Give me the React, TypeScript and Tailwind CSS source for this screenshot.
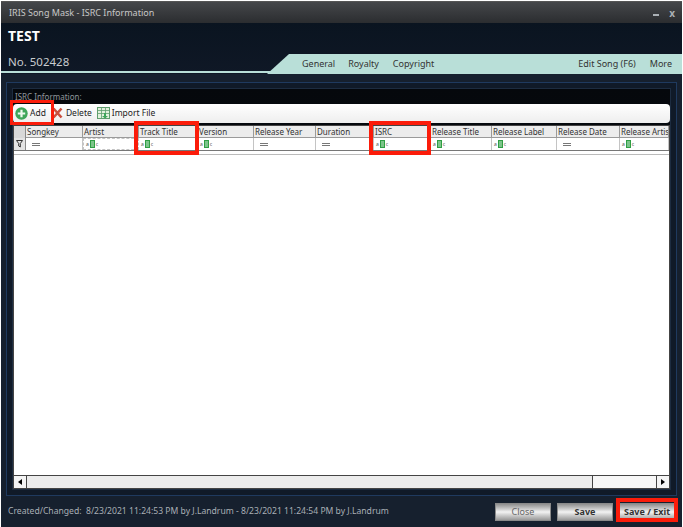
const columns = [
  { name: 'Songkey', width: 'w-[57px]', filter: 'eq' },
  { name: 'Artist', width: 'w-[56px]', filter: 'abc', focused: true },
  { name: 'Track Title', width: 'w-[59px]', filter: 'abc' },
  { name: 'Version', width: 'w-[56px]', filter: 'abc' },
  { name: 'Release Year', width: 'w-[62px]', filter: 'eq' },
  { name: 'Duration', width: 'w-[58px]', filter: 'eq' },
  { name: 'ISRC', width: 'w-[57px]', filter: 'abc' },
  { name: 'Release Title', width: 'w-[61px]', filter: 'abc' },
  { name: 'Release Label', width: 'w-[65px]', filter: 'abc' },
  { name: 'Release Date', width: 'w-[63px]', filter: 'eq' },
  { name: 'Release Artist', width: 'flex-1', filter: 'abc' },
];

function AbcIcon() {
  return (
    <span className="flex items-center gap-px text-[5px] leading-none text-[#555]">
      <span>a</span>
      <span className="h-[8px] w-[5px] border border-[#2f9e44] bg-[#7cc48a]" />
      <span>c</span>
    </span>
  );
}

function EqIcon() {
  return (
    <span className="ml-1 flex w-[8px] flex-col gap-px">
      <span className="h-px bg-[#777]" />
      <span className="h-px bg-[#777]" />
    </span>
  );
}

function PlusIcon() {
  return (
    <svg width="13" height="13" viewBox="0 0 13 13">
      <circle cx="6.5" cy="6.5" r="6.2" fill="#3fa65a" />
      <path d="M6.5 2.8v7.4M2.8 6.5h7.4" stroke="#eef8ef" strokeWidth="2.2" />
    </svg>
  );
}

function DeleteIcon() {
  return (
    <svg width="11" height="12" viewBox="0 0 11 12">
      <path d="M1.5 1.5 9.5 10.5M9.5 1.5 1.5 10.5" stroke="#c9503f" strokeWidth="2.6" />
    </svg>
  );
}

function ImportIcon() {
  return (
    <svg width="13" height="12" viewBox="0 0 13 12">
      <rect x="0.5" y="0.5" width="12" height="11" fill="#e2f1dd" stroke="#5f9e6e" />
      <path d="M0.5 3.5h12M0.5 6.5h12M4.5 0.5v11M8.5 0.5v11" stroke="#5f9e6e" strokeWidth="0.8" />
      <path d="M7 6v3H5l3 2.5L11 9H9V6z" fill="#3fa65a" />
    </svg>
  );
}

function FooterButton({ label, bold }: { label: string; bold?: boolean }) {
  return (
    <div
      className={`flex h-[18px] w-[56px] items-center justify-center border border-[#8a8a8a] bg-gradient-to-b from-[#8f8f8f] via-[#f2f2f2] to-[#9a9a9a] text-[9px] ${
        bold ? 'font-bold text-[#333]' : 'text-[#666]'
      }`}
    >
      {label}
    </div>
  );
}

export default function App() {
  return (
    <div className="relative flex h-[527px] w-[683px] flex-col overflow-hidden bg-white pt-px font-['Noto_Sans',sans-serif]">
      <div className="mx-px flex min-h-0 flex-1 flex-col border-t border-[#555] bg-[#16202e]">
        {/* Title bar */}
        <div className="flex h-[21px] items-center justify-between bg-gradient-to-b from-[#45474a] to-[#2b2d30] pl-2 pr-[7px] text-[9px] text-[#c8c8c8]">
          <span>IRIS Song Mask - ISRC Information</span>
          <span className="flex items-center gap-[10px] text-[10px] font-bold text-[#aab0b5]">
            <span className="mt-1 h-[2px] w-[6px] bg-[#aab0b5]" />
            <span className="leading-none">x</span>
          </span>
        </div>

        {/* Song header */}
        <div className="relative h-[51px] bg-gradient-to-b from-[#0a1420] to-[#0f1826]">
          <div className="pl-[7px] pt-[3px] text-[14px] leading-[20px] font-bold text-white">TEST</div>
          <div className="pl-[7px] pt-[7px] text-[11.5px] leading-[18px] text-[#c9ccd0]">No. 502428</div>
          <div className="absolute inset-x-0 bottom-[1px] h-[2px] bg-[#b9dfd8]" />
          <div className="absolute right-0 bottom-0 flex h-[20px] w-[415px] items-center bg-[#b9dfd8] pr-[10px] pl-[35px] text-[9px] text-[#333] [clip-path:polygon(22px_0,100%_0,100%_100%,0_100%)]">
            <span>General</span>
            <span className="ml-[13px]">Royalty</span>
            <span className="ml-[14px]">Copyright</span>
            <span className="ml-auto">Edit Song (F6)</span>
            <span className="ml-[14px]">More</span>
          </div>
        </div>

        {/* ISRC panel */}
        <div className="mx-[5px] mt-[8px] flex h-[414px] flex-col border border-[#1f3a5f] bg-[#101a28] p-[5px]">
          <div className="flex min-h-0 flex-1 flex-col border border-[#1d2c40] bg-gradient-to-b from-[#05080c] to-[#0a1420]">
            <div className="h-[15px] pl-[2px] text-[8px] leading-[16px] text-[#8f959b]">ISRC Information:</div>
            <div className="flex h-[19px] items-center rounded-sm bg-gradient-to-b from-white to-[#eeeeee] pb-px pl-[2px] text-[8.5px] text-[#222]">
              <PlusIcon />
              <span className="ml-[2px]">Add</span>
              <span className="ml-[6px]"><DeleteIcon /></span>
              <span className="ml-[3px]">Delete</span>
              <span className="ml-[5px]"><ImportIcon /></span>
              <span className="ml-[2px]">Import File</span>
            </div>

            <div className="mt-[2px] flex min-h-0 flex-1 flex-col border border-[#444] bg-white">
              <div className="flex h-[12px] bg-[#ececec]">
                <div className="w-[12px] shrink-0 border-r border-[#8a8a8a] bg-[#d8d8d8]" />
                {columns.map((col) => (
                  <div
                    key={col.name}
                    className={`${col.width} shrink-0 overflow-hidden border-r border-b border-[#9a9a9a] pl-[1px] text-[8px] leading-[11px] whitespace-nowrap text-[#333]`}
                  >
                    {col.name}
                  </div>
                ))}
              </div>
              <div className="flex h-[13px] border-b border-[#777] bg-white">
                <div className="flex w-[12px] shrink-0 items-center justify-center border-r border-[#8a8a8a] bg-[#e4e4e4]">
                  <svg width="7" height="8" viewBox="0 0 7 8">
                    <path d="M0.5 0.5h6L4.3 3.5V7L2.7 6V3.5z" fill="none" stroke="#333" />
                  </svg>
                </div>
                {columns.map((col) => (
                  <div
                    key={col.name}
                    className={`${col.width} flex shrink-0 items-center border-r border-[#c4c4c4] pl-[2px] ${
                      col.focused ? 'border border-dashed border-[#555]' : ''
                    }`}
                  >
                    {col.filter === 'abc' ? <AbcIcon /> : <EqIcon />}
                  </div>
                ))}
              </div>
              <div className="mt-[3px] h-px bg-[#bbb]" />
              <div className="min-h-0 flex-1 bg-white" />
              <div className="flex h-[13px] items-stretch border-t border-[#444] bg-[#f7f7f7]">
                <div className="flex w-[13px] items-center justify-center border-r border-[#444] bg-[#f4f4f4]">
                  <span className="h-0 w-0 border-y-[3px] border-r-[4px] border-y-transparent border-r-black" />
                </div>
                <div className="w-[566px] border-r border-[#444] bg-[#ececec]" />
                <div className="flex-1" />
                <div className="flex w-[13px] items-center justify-center border-l border-[#444] bg-[#f4f4f4]">
                  <span className="h-0 w-0 border-y-[3px] border-l-[4px] border-y-transparent border-l-black" />
                </div>
              </div>
            </div>
          </div>
        </div>

        {/* Footer */}
        <div className="flex flex-1 items-center pr-[7px] pl-[7px] text-[8.6px] text-[#a9afb5]">
          <span className="whitespace-nowrap">
            Created/Changed:&nbsp; 8/23/2021 11:24:53 PM by J.Landrum - 8/23/2021 11:24:54 PM by J.Landrum
          </span>
          <div className="ml-auto flex gap-[6px]">
            <FooterButton label="Close" />
            <FooterButton label="Save" bold />
            <FooterButton label="Save / Exit" bold />
          </div>
        </div>
      </div>

      {/* Red callouts drawn over the screenshot */}
      <div className="pointer-events-none absolute top-[100px] left-[10px] h-[25px] w-[44px] border-[3px] border-[#fb1c0a]" />
      <div className="pointer-events-none absolute top-[121px] left-[134px] h-[34px] w-[65px] border-[4px] border-[#fb1c0a]" />
      <div className="pointer-events-none absolute top-[121px] left-[369px] h-[34px] w-[62px] border-[4px] border-[#fb1c0a]" />
      <div className="pointer-events-none absolute top-[498px] left-[616px] h-[24px] w-[62px] border-[4px] border-[#fb1c0a]" />
    </div>
  );
}
